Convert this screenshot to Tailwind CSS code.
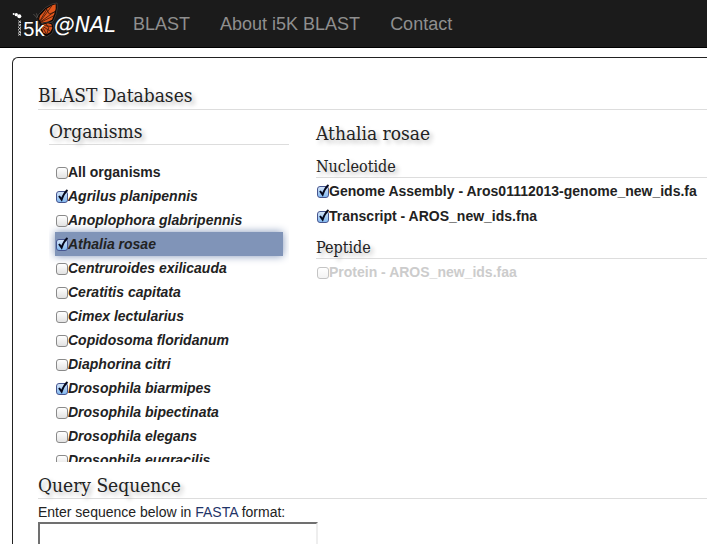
<!DOCTYPE html>
<html lang="en">
<head>
<meta charset="utf-8">
<meta name="viewport" content="width=device-width, initial-scale=1">
<title>i5k BLAST</title>
<script src="https://cdn.jsdelivr.net/npm/@tailwindcss/browser@4"></script>
</head>
<body class="flex h-screen flex-col overflow-hidden bg-white font-['Liberation_Sans',Arial,sans-serif] text-sm text-[#222]">

<nav class="flex h-12 shrink-0 items-center border-b border-black bg-[#1b1b1b] text-lg text-[#8f8f8f]" aria-label="Main">
  <a href="#" class="block shrink-0" aria-label="i5k @NAL home">
    <svg class="block h-12 w-[118px]" viewBox="0 0 354 144">
      <!-- upper wing -->
      <path d="M113 62 L110 53 L117 42 L136 23 L156 12 L171 9 L172 24 L168 43 L160 63 L145 70 L122 72 Z" fill="#0a0706" stroke="#4c4947" stroke-width="2"/>
      <path d="M117 59 L120 47 L138 28 L157 16 L167 13 L167 27 L163 42 L156 59 L143 65 L124 68 Z" fill="#e0561c"/>
      <path d="M119 64 L141 27 M120 65 L156 17 M121 66 L166 33 M122 67 L162 47 M139 27 L148 42 L165 36" fill="none" stroke="#160b07" stroke-width="2"/>
      <!-- lower wing -->
      <path d="M118 73 L144 66 L158 69 L162 84 L156 100 L140 110 L129 105 L121 90 Z" fill="#0a0706" stroke="#4c4947" stroke-width="2"/>
      <path d="M122 76 L144 70 L154 73 L157 84 L151 96 L140 103 L130 98 Z" fill="#d9531d"/>
      <path d="M122 75 L156 80 M123 76 L152 94 M124 76 L140 103 M137 71 L146 83 L141 101" fill="none" stroke="#160b07" stroke-width="2"/>
      <!-- body and antennae -->
      <path d="M113 54 L124 76" fill="none" stroke="#15100e" stroke-width="5"/>
      <path d="M112 54 L100 42 M114 53 L109 40" fill="none" stroke="#65605d" stroke-width="2"/>
      <!-- beaded stem -->
      <path d="M55 62l8 7m0-7l-8 7M55 72l8 7m0-7l-8 7M55 82l8 7m0-7l-8 7M55 92l8 7m0-7l-8 7M55 101l8 5m0-5l-8 5" stroke="#ddd" stroke-width="3"/>
      <g fill="#fff"><circle cx="41" cy="42" r="3"/><circle cx="49" cy="44" r="5"/><circle cx="58" cy="49" r="6"/></g>
      <text x="70" y="107" font-family="'Liberation Sans', sans-serif" font-size="60" fill="#fff">5k</text>
      <text x="162" y="96" font-family="'DejaVu Sans', sans-serif" font-style="italic" font-size="62" fill="#fff">@NAL</text>
    </svg>
  </a>
  <a href="#" class="px-[15px]">BLAST</a>
  <a href="#" class="px-[15px]">About i5K BLAST</a>
  <a href="#" class="px-[15px]">Contact</a>
</nav>

<main class="mt-[9px] ml-3 min-h-0 flex-1 overflow-hidden rounded-tl-md border-t border-l border-[#222] pt-6 pl-[25px]">
  <form>
    <h1 class="border-b border-[#ddd] pb-px font-['DejaVu_Serif_Condensed','DejaVu_Serif',serif] text-[19px] leading-[26px] text-shadow-[3px_3px_4px_#bbb]">BLAST Databases</h1>

    <div class="flex">
      <section class="ml-[11px] w-60 shrink-0">
        <h2 class="border-b border-[#ddd] pt-2 font-['DejaVu_Serif_Condensed','DejaVu_Serif',serif] text-[19px] leading-[26px] text-shadow-[3px_3px_4px_#bbb]">Organisms</h2>
        <ul id="organisms" class="h-[317px] overflow-hidden px-1.5 pt-[15px] font-bold italic"></ul>
      </section>

      <section class="ml-[27px] min-w-0 flex-1 font-bold">
        <h2 class="pt-2.5 font-['DejaVu_Serif_Condensed','DejaVu_Serif',serif] text-[19px] leading-[26px] font-normal text-shadow-[3px_3px_4px_#bbb]">Athalia rosae</h2>
        <h3 class="border-b border-[#ddd] pt-2.5 font-['DejaVu_Serif_Condensed','DejaVu_Serif',serif] text-base leading-[21px] font-normal text-shadow-[3px_3px_4px_#bbb]">Nucleotide</h3>
        <ul id="nucleotide"></ul>
        <h3 class="border-b border-[#ddd] pt-[9px] font-['DejaVu_Serif_Condensed','DejaVu_Serif',serif] text-base leading-[21px] font-normal text-shadow-[3px_3px_4px_#bbb]">Peptide</h3>
        <ul id="peptide"></ul>
      </section>
    </div>

    <h1 class="border-b border-[#ddd] pt-2.5 font-['DejaVu_Serif_Condensed','DejaVu_Serif',serif] text-[19px] leading-[26px] text-shadow-[3px_3px_4px_#bbb]">Query Sequence</h1>
    <p class="pt-1 leading-[19px]"><label for="sequence">Enter sequence below in</label> <a href="#" class="text-[#1f3468]">FASTA</a> format:</p>
    <textarea id="sequence" class="block h-32 w-[280px] resize-none border-2 border-t-[#707070] border-r-[#eee] border-b-[#eee] border-l-[#707070] bg-white"></textarea>
  </form>
</main>

<template id="row">
  <li class="flex items-center whitespace-nowrap">
    <span class="relative mt-0.5 ml-px block size-3 shrink-0">
      <input type="checkbox" class="peer block size-3 appearance-none rounded-[3px] border border-[#8a8a8a] bg-linear-to-b from-white to-[#e2e2e2] checked:border-[#46558f] checked:from-[#d3e4f8] checked:to-[#83b9f0] disabled:border-[#c4c4c4] disabled:to-[#f3f3f3]">
      <svg class="pointer-events-none absolute -top-0.5 left-0 hidden h-3.5 w-3.5 peer-checked:block" viewBox="0 0 14 14" fill="none" stroke="#05081c" stroke-width="2"><path d="M3 7l2.600 3.600C7 6.600 8.600 3.500 11.500 1"/></svg>
    </span>
    <label></label>
  </li>
</template>

<script>
  const template = document.getElementById('row');
  let count = 0;

  function addRow(listId, text, options = {}) {
    const row = template.content.firstElementChild.cloneNode(true);
    const input = row.querySelector('input');
    const label = row.querySelector('label');
    input.id = 'db-' + count++;
    input.checked = !!options.checked;
    input.disabled = !!options.disabled;
    label.htmlFor = input.id;
    label.textContent = text;
    row.classList.add(listId === 'organisms' ? 'h-6' : 'h-[25px]');
    if (options.upright) row.classList.add('not-italic');
    if (options.disabled) row.classList.add('text-[#ccc]');
    if (options.active) row.classList.add('bg-[#8094b8]', 'shadow-[0_0_8px_#8094b8]');
    document.getElementById(listId).append(row);
  }

  addRow('organisms', 'All organisms', { upright: true });
  addRow('organisms', 'Agrilus planipennis', { checked: true });
  addRow('organisms', 'Anoplophora glabripennis');
  addRow('organisms', 'Athalia rosae', { checked: true, active: true });
  ['Centruroides exilicauda', 'Ceratitis capitata', 'Cimex lectularius', 'Copidosoma floridanum', 'Diaphorina citri'].forEach(name => addRow('organisms', name));
  addRow('organisms', 'Drosophila biarmipes', { checked: true });
  ['Drosophila bipectinata', 'Drosophila elegans', 'Drosophila eugracilis'].forEach(name => addRow('organisms', name));
  addRow('nucleotide', 'Genome Assembly - Aros01112013-genome_new_ids.fa', { checked: true });
  addRow('nucleotide', 'Transcript - AROS_new_ids.fna', { checked: true });
  addRow('peptide', 'Protein - AROS_new_ids.faa', { disabled: true });
</script>
</body>
</html>
